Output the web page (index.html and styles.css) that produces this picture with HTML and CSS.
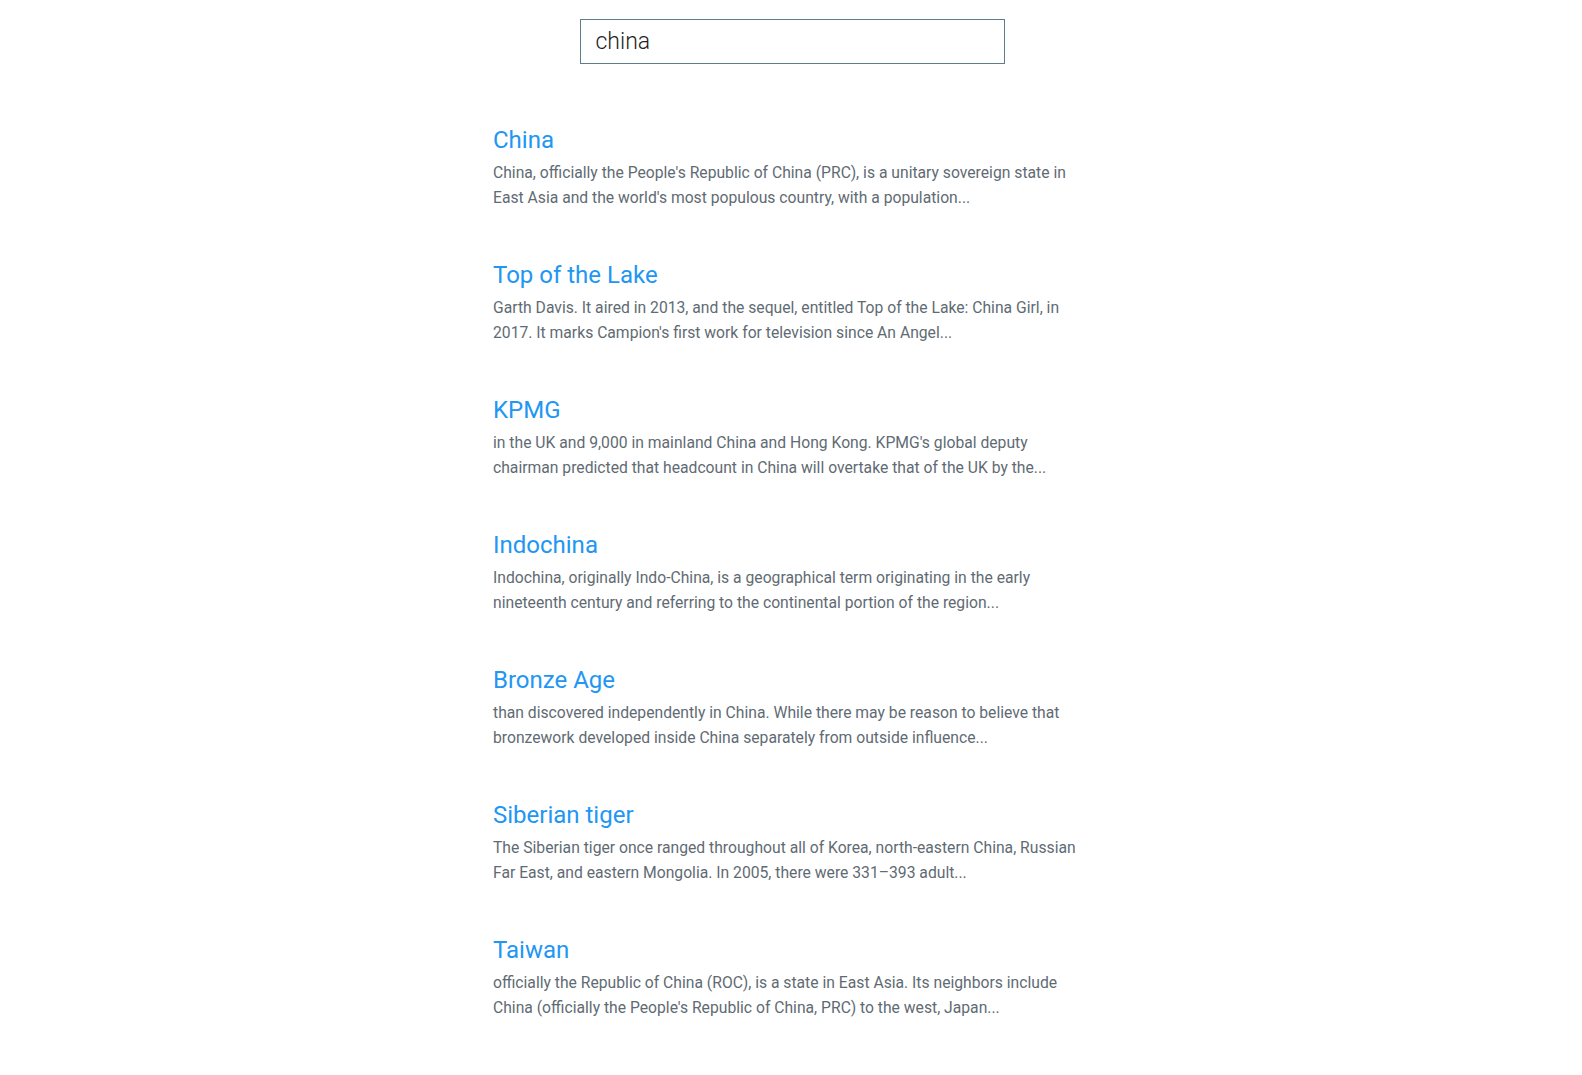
FILE: index.html
```html
<!DOCTYPE html>
<html lang="en">
<head>
<meta charset="utf-8">
<title>Search</title>
<link rel="stylesheet" href="styles.css">
</head>
<body>
<div class="search-bar">
  <input class="search-input" type="text" value="china">
</div>
<main class="results">
  <article class="result">
    <h2 class="result-title">China</h2>
    <p class="result-text">China, officially the People's Republic of China (PRC), is a unitary sovereign state in East Asia and the world's most populous country, with a population...</p>
  </article>
  <article class="result">
    <h2 class="result-title">Top of the Lake</h2>
    <p class="result-text">Garth Davis. It aired in 2013, and the sequel, entitled Top of the Lake: China Girl, in 2017. It marks Campion's first work for television since An Angel...</p>
  </article>
  <article class="result">
    <h2 class="result-title">KPMG</h2>
    <p class="result-text">in the UK and 9,000 in mainland China and Hong Kong. KPMG's global deputy chairman predicted that headcount in China will overtake that of the UK by the...</p>
  </article>
  <article class="result">
    <h2 class="result-title">Indochina</h2>
    <p class="result-text">Indochina, originally Indo-China, is a geographical term originating in the early nineteenth century and referring to the continental portion of the region...</p>
  </article>
  <article class="result">
    <h2 class="result-title">Bronze Age</h2>
    <p class="result-text">than discovered independently in China. While there may be reason to believe that bronzework developed inside China separately from outside influence...</p>
  </article>
  <article class="result">
    <h2 class="result-title">Siberian tiger</h2>
    <p class="result-text">The Siberian tiger once ranged throughout all of Korea, north-eastern China, Russian Far East, and eastern Mongolia. In 2005, there were 331–393 adult...</p>
  </article>
  <article class="result">
    <h2 class="result-title">Taiwan</h2>
    <p class="result-text">officially the Republic of China (ROC), is a state in East Asia. Its neighbors include China (officially the People's Republic of China, PRC) to the west, Japan...</p>
  </article>
  <article class="result">
    <h2 class="result-title">Economy of China</h2>
    <p class="result-text">The socialist market economy of the People's Republic of China is the world's second largest economy by nominal GDP and the world's largest...</p>
  </article>
</main>
</body>
</html>
```

FILE: styles.css
```css
html, body {
  margin: 0;
  padding: 0;
  background: #ffffff;
  font-family: Roboto, "Liberation Sans", Arial, sans-serif;
}

.search-bar {
  display: flex;
  justify-content: center;
  padding-top: 19px;
}

.search-input {
  box-sizing: border-box;
  width: 425px;
  height: 45px;
  margin-left: 2px;
  border: 1px solid #607d8b;
  border-radius: 0;
  padding: 0 15px;
  font-family: Roboto, "Liberation Sans", Arial, sans-serif;
  font-size: 23px;
  font-weight: 300;
  color: #1e1e1e;
  outline: none;
  background: #fff;
}

.results {
  width: 598px;
  margin: 62px auto 0;
  padding-left: 1px;
  box-sizing: border-box;
}

.result {
  padding-bottom: 51px;
}

.result-title {
  margin: 0;
  font-size: 24px;
  line-height: 28px;
  font-weight: 400;
  color: #2196f3;
}

.result-text {
  margin: 6px 0 0;
  font-size: 15.7px;
  line-height: 25px;
  color: #5f6b73;
}
```
